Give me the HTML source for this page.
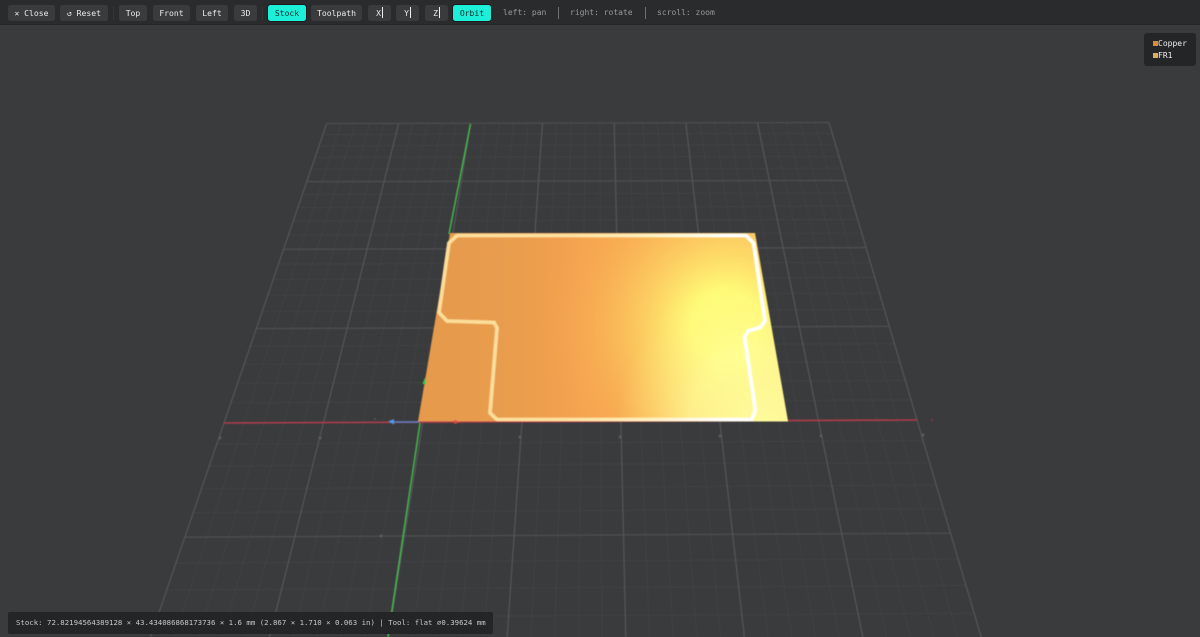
<!DOCTYPE html>
<html><head><meta charset="utf-8">
<style>
html,body{margin:0;padding:0;width:1200px;height:637px;overflow:hidden;background:#3a3b3d;font-family:"DejaVu Sans Mono","Liberation Mono",monospace}
svg.v{position:absolute;left:0;top:0;filter:blur(.45px)}
#bar{position:absolute;left:0;top:0;width:1200px;height:24px;background:#2a2b2d;border-bottom:1px solid #252628}
.b{position:absolute;top:5px;height:16px;line-height:16px;border-radius:2.5px;background:#3a3b3d;color:#ececec;font-size:8.1px;text-align:center;white-space:nowrap}
.a{background:#1cf0d8;color:#10282a;box-shadow:0 0 0 1px #1b1b1d;top:5px}
.h{position:absolute;top:5px;height:16px;line-height:16px;color:#999;font-size:8px;white-space:nowrap}
.sep{position:absolute;top:7px;width:1px;height:12px;background:#6f6f6f}
.fs{position:absolute;top:6px;width:1px;height:14px;background:#333436}
.bar{display:inline-block;width:1px;height:11px;background:#eee;vertical-align:-2px;margin-left:1px}
#legend{position:absolute;left:1144px;top:33px;width:52px;height:33px;background:#242527;border-radius:3px;color:#efefef;font-size:8px}
#legend div{position:absolute;left:9px;height:12px;line-height:12px;white-space:nowrap}
#legend i{display:inline-block;width:5px;height:5px;vertical-align:0}
#status{position:absolute;left:8px;top:612px;width:485px;height:22px;line-height:21px;background:#242527;border-radius:2px;color:#c8c8c8;font-size:7.37px;white-space:pre;text-indent:8px}
</style></head><body>
<svg class="v" id="s" width="1200" height="637" viewBox="0 0 1200 637">
<defs>
<linearGradient id="g1" x1="418" y1="0" x2="788" y2="0" gradientUnits="userSpaceOnUse">
<stop offset="0" stop-color="#e59a4c"/><stop offset=".25" stop-color="#e99d4d"/><stop offset=".45" stop-color="#f5a24f"/><stop offset=".65" stop-color="#f8a850"/><stop offset="1" stop-color="#fbc060"/>
</linearGradient>
<radialGradient id="g2" cx="725" cy="325" r="190" gradientUnits="userSpaceOnUse">
<stop offset="0" stop-color="#ffff7c" stop-opacity="1"/><stop offset=".18" stop-color="#ffff78" stop-opacity=".96"/><stop offset=".4" stop-color="#ffe46c" stop-opacity=".7"/><stop offset=".7" stop-color="#fdc25c" stop-opacity=".3"/><stop offset="1" stop-color="#f9a850" stop-opacity="0"/>
</radialGradient>
<radialGradient id="g3" cx="765" cy="425" r="150" gradientUnits="userSpaceOnUse">
<stop offset="0" stop-color="#ffffa0" stop-opacity=".95"/><stop offset=".5" stop-color="#ffff9c" stop-opacity=".7"/><stop offset="1" stop-color="#ffee80" stop-opacity="0"/>
</radialGradient>
<linearGradient id="tr" x1="440" y1="0" x2="760" y2="0" gradientUnits="userSpaceOnUse">
<stop offset="0" stop-color="#fbdc98"/><stop offset=".4" stop-color="#fde0a0"/><stop offset=".65" stop-color="#fff0c0"/><stop offset=".9" stop-color="#ffffff"/>
</linearGradient>
</defs>
<g id="grid"></g>
<line x1="224" y1="423" x2="917" y2="420" stroke="#b03c4c" stroke-width="1.6"/>
<line x1="470.5" y1="124" x2="449" y2="234" stroke="#44c04c" stroke-width="1.4"/>
<line x1="420" y1="423" x2="388" y2="637" stroke="#44c04c" stroke-width="1.4"/>
<line x1="390" y1="422" x2="419" y2="422" stroke="#5f80d0" stroke-width="1.6"/>
<path d="M388 421.5L394 419V424.5Z" fill="#4e9be8"/>
<path d="M450 233H755L788 421.500H418Z" fill="url(#g1)"/>
<path d="M450 233H755L788 421.500H418Z" fill="url(#g2)"/>
<path d="M450 233H755L788 421.500H418Z" fill="url(#g3)"/>
<path d="M457 235.500H746L753.500 243L765 321L760 327.500L748 331L744.500 337L755 407V412L751.500 419.500H497L490 413L497 328L494 322.500L447 321L439 312.500L449 243Z" fill="none" stroke="url(#tr)" stroke-width="3.8" stroke-linejoin="miter"/>
<path d="M422.500 384L425 377.500L426 384Z" fill="#3ad048"/>
<path d="M454 420L461 422L454 424Z" fill="#e04848"/>
<circle cx="932" cy="420" r="1" fill="#a03040"/>
<circle cx="375" cy="419" r="1" fill="#505868"/>
<g fill="#5c5d5e">
<circle cx="220" cy="438" r="1.500"/><circle cx="320" cy="438" r="1.500"/><circle cx="520" cy="437" r="1.500"/><circle cx="620" cy="437" r="1.500"/><circle cx="720" cy="436" r="1.500"/><circle cx="821" cy="436" r="1.500"/><circle cx="923" cy="435" r="1.500"/><circle cx="381" cy="536" r="1.500"/>
</g>
</svg>
<div id="bar">
<div class="b" style="left:8px;width:47px">✕ Close</div>
<div class="b" style="left:60px;width:48px">↺ Reset</div>
<div class="fs" style="left:113px"></div>
<div class="b" style="left:119px;width:28px">Top</div>
<div class="b" style="left:153px;width:37px">Front</div>
<div class="b" style="left:196px;width:32px">Left</div>
<div class="b" style="left:234px;width:23px">3D</div>
<div class="fs" style="left:262px"></div>
<div class="b a" style="left:268px;width:38px">Stock</div>
<div class="b" style="left:311px;width:51px">Toolpath</div>
<div class="b" style="left:368px;width:23px">X<span class="bar"></span></div>
<div class="b" style="left:396px;width:23px">Y<span class="bar"></span></div>
<div class="b" style="left:425px;width:23px">Z<span class="bar"></span></div>
<div class="b a" style="left:453px;width:38px">Orbit</div>
<div class="h" style="left:503px">left: pan</div>
<div class="sep" style="left:558px"></div>
<div class="h" style="left:570px">right: rotate</div>
<div class="sep" style="left:645px"></div>
<div class="h" style="left:657px">scroll: zoom</div>
</div>
<div id="legend">
<div style="top:5px"><i style="background:#d98c30"></i>Copper</div>
<div style="top:17px"><i style="background:#dcae62"></i>FR1</div>
</div>
<div id="status">Stock: 72.82194564389128 × 43.434086868173736 × 1.6 mm (2.867 × 1.710 × 0.063 in) | Tool: flat ⌀0.39624 mm</div>
<script>
(function(){
var P=[[326.7,123.5],[829,122.5],[917,420],[224,423]];
var x0=P[0][0],y0=P[0][1],x1=P[1][0],y1=P[1][1],x2=P[2][0],y2=P[2][1],x3=P[3][0],y3=P[3][1];
var dx1=x1-x2,dx2=x3-x2,sx=x0-x1+x2-x3,dy1=y1-y2,dy2=y3-y2,sy=y0-y1+y2-y3;
var d=dx1*dy2-dx2*dy1,g=(sx*dy2-dx2*sy)/d,h=(dx1*sy-sx*dy1)/d;
var a=x1-x0+g*x1,b=x3-x0+h*x3,c=x0,e=y1-y0+g*y1,f=y3-y0+h*y3;
function M(s,t){var u=s/7,v=t/4,w=g*u+h*v+1;return[(a*u+b*v+c)/w,(e*u+f*v+y0)/w];}
var o='',i,T=6.6;
function L(p,q,col,wd){o+='<line x1="'+p[0].toFixed(1)+'" y1="'+p[1].toFixed(1)+'" x2="'+q[0].toFixed(1)+'" y2="'+q[1].toFixed(1)+'" stroke="'+col+'" stroke-width="'+wd+'"/>';}
for(i=0;i<=35;i++){if(i%5){L(M(i/5,0),M(i/5,T),'#424345',.9);}}
for(i=0;i<=33;i++){if(i%5){L(M(0,i/5),M(7,i/5),'#424345',.9);}}
for(i=0;i<=7;i++){L(M(i,0),M(i,T),'#58595b',1.1);}
for(i=0;i<=6;i++){L(M(0,i),M(7,i),'#515254',1.1);}
document.getElementById('grid').innerHTML=o;
})();
</script>
</body></html>
